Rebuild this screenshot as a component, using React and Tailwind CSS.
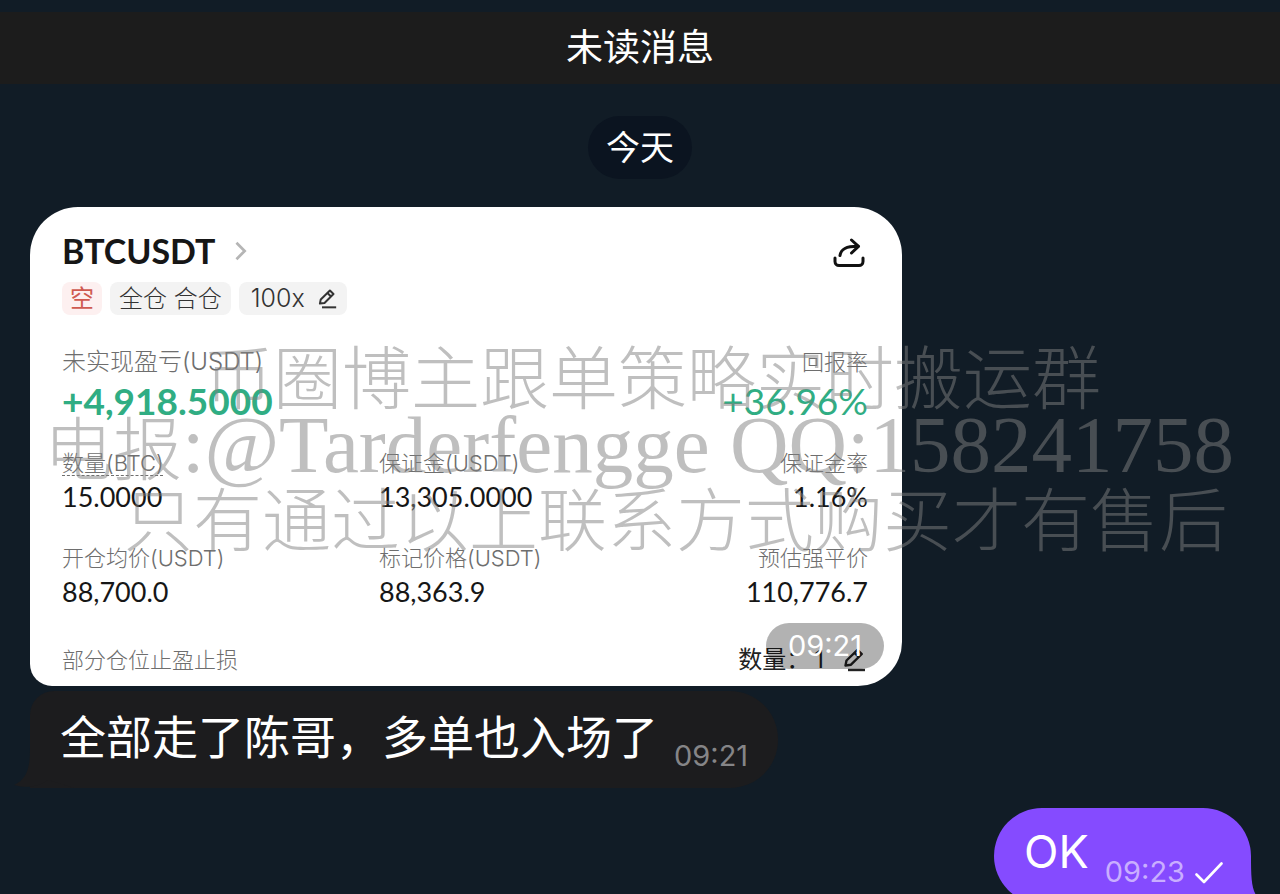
import React from 'react';

const stats = [
    { label: '数量(BTC)', value: '15.0000', dotted: true },
    { label: '保证金(USDT)', value: '13,305.0000' },
    { label: '保证金率', value: '1.16%' },
];

const prices = [
    { label: '开仓均价(USDT)', value: '88,700.0' },
    { label: '标记价格(USDT)', value: '88,363.9' },
    { label: '预估强平价', value: '110,776.7' },
];

const EditIcon = ({ className }) => (
    <svg viewBox="0 0 24 24" fill="none" stroke="currentColor" strokeWidth="2.4" strokeLinejoin="round" className={className}>
        <path d="M3.500 17.500 4.500 12.500 15.500 1.800 19.800 6 9 16.700Z" />
        <path d="M12.500 4.800 16.800 9" />
        <path d="M6 22h17" />
    </svg>
);

const ShareIcon = () => (
    <svg viewBox="0 0 32 30" fill="none" stroke="currentColor" strokeWidth="3" strokeLinecap="round" strokeLinejoin="round" className="h-[30px] w-8">
        <path d="M2 20v3.500a4 4 0 0 0 4 4h20a4 4 0 0 0 4-4V20" />
        <path d="M7 17.500C8 11 13 8.300 25 8.300" />
        <path d="M18.500 2 25.500 8.300 18.500 15" />
    </svg>
);

const StatRow = ({ items, className }) => (
    <dl className={`grid grid-cols-[317fr_245fr_244fr] ${className}`}>
        {items.map((item) => (
            <div key={item.label} className="whitespace-nowrap last:text-right">
                <dt className="text-[22px] leading-7 font-light text-[#6e6e6e]">
                    <span className={item.dotted ? 'underline decoration-dashed decoration-1 underline-offset-4' : ''}>{item.label}</span>
                </dt>
                <dd className="mt-1 font-['Lato',sans-serif] text-[27px] leading-8 text-[#161616]">{item.value}</dd>
            </div>
        ))}
    </dl>
);

const PositionCard = () => (
    <article className="relative w-full max-w-[872px] rounded-t-[48px] rounded-br-[44px] rounded-bl-[22px] bg-white pt-6 pr-[34px] pb-3 pl-8">
        <header className="flex h-10 items-center justify-between">
            <a href="#btcusdt" className="flex items-center gap-[18px] font-['Lato',sans-serif] text-[34px] leading-10 font-bold text-[#161616]">
                BTCUSDT
                <svg viewBox="0 0 14 22" fill="none" stroke="#b5b5b5" strokeWidth="3" className="h-5 w-3.5">
                    <path d="M2 2l9 9-9 9" />
                </svg>
            </a>
            <button type="button" aria-label="分享" className="mt-1 mr-[3px] text-[#111]">
                <ShareIcon />
            </button>
        </header>

        <div className="mt-[11px] flex gap-2 text-2xl leading-[33px] font-light text-[#333]">
            <span className="rounded-lg bg-[#fdf0f0] px-2 font-normal text-[#cf5a50]">空</span>
            <span className="rounded-lg bg-[#f3f3f3] px-[9px]">全仓 合仓</span>
            <button type="button" className="flex items-center gap-3 rounded-lg bg-[#f3f3f3] pr-2.5 pl-3">
                <span className="text-[25px]">100x</span>
                <EditIcon className="h-5 w-5" />
            </button>
        </div>

        <div className="mt-[33px] flex justify-between">
            <div>
                <p className="text-2xl leading-7 font-light text-[#6e6e6e]">未实现盈亏(USDT)</p>
                <p className="mt-[3px] font-['Lato',sans-serif] text-[37px] leading-11 font-bold text-[#30ad83]">+4,918.5000</p>
            </div>
            <div className="text-right">
                <p className="text-[22px] leading-7 font-light text-[#6e6e6e]">回报率</p>
                <p className="mt-[3px] font-['Lato',sans-serif] text-[37px] leading-11 text-[#30ad83]">+36.96%</p>
            </div>
        </div>

        <StatRow items={stats} className="mt-[26px]" />
        <StatRow items={prices} className="mt-[31px]" />

        <footer className="mt-[38px] flex items-center justify-between leading-7">
            <p className="text-[22px] font-light text-[#6e6e6e]">部分仓位止盈止损</p>
            <button type="button" className="flex items-center text-2xl leading-7 text-[#222]">
                <span>数量：</span>
                <span className="mr-[18px] ml-1">1</span>
                <EditIcon className="mr-0.5 h-6 w-6" />
            </button>
        </footer>

        <time className="absolute right-[18px] bottom-[17px] rounded-full bg-black/30 px-[22px] text-[29px] leading-[46px] text-white">09:21</time>
    </article>
);

const Watermark = () => (
    <div className="pointer-events-none absolute inset-x-0 top-[339px] font-['Noto_Sans_CJK_SC',sans-serif] text-[69px] leading-[71px] font-light whitespace-nowrap text-[#808080]/50">
        <p className="pl-51">币圈博主跟单策略实时搬运群</p>
        <p className="flex pl-11">
            电报
            <span className="font-['Liberation_Serif',serif] text-[81px] font-normal">:@Tarderfengge QQ:158241758</span>
        </p>
        <p className="pl-31">只有通过以上联系方式购买才有售后</p>
    </div>
);

const App = () => {
    return (
        <main className="relative flex h-screen flex-col overflow-hidden bg-[#111c26] pt-3 font-['Inter','Noto_Sans_CJK_SC',sans-serif] text-white">
            <h1 className="shrink-0 bg-[#1c1c1c] text-center text-[37px] leading-[72px]">未读消息</h1>

            <p className="mt-8 shrink-0 self-center rounded-full bg-[#0b1420] px-[18px] text-[34px] leading-[63px]">今天</p>

            <section className="mt-7 flex flex-col items-start pr-[29px] pl-[30px]">
                <PositionCard />

                <div className="relative mt-[5px] flex items-end rounded-t-[40px] rounded-r-[48px] rounded-tl-[24px] bg-[#1c1c1e] px-[30px]">
                    <svg viewBox="0 0 60 40" fill="#1c1c1e" className="absolute bottom-0 -left-4 h-10 w-15">
                        <path d="M16 0C16 20 13 31 0 37c14 4 26 1 34-5l26 8V0Z" />
                    </svg>
                    <p className="relative pb-1 text-[46px] leading-[93px]">全部走了陈哥，多单也入场了</p>
                    <time className="ml-4 pb-3 text-[29px] leading-10 text-[#858587]">09:21</time>
                </div>

                <div className="relative mt-5 flex items-end self-end rounded-full bg-[#854bff] pr-7 pl-[30px]">
                    <svg viewBox="0 0 60 48" fill="#854bff" className="absolute -right-4 bottom-0 h-12 w-15">
                        <path d="M44 0C44 30 45 42 60 47c-14 4-26 1-34-5L0 48V0Z" />
                    </svg>
                    <p className="relative pb-2 text-[45px] leading-[88px]">OK</p>
                    <time className="relative ml-4 pb-3 text-[29px] leading-10 text-[#c9aeff]">09:23</time>
                    <svg viewBox="0 0 28 22" fill="none" stroke="#fff" strokeWidth="2.6" strokeLinecap="round" strokeLinejoin="round" className="relative mb-5 ml-2.5 h-[22px] w-7">
                        <path d="M1.500 12.500 9 20 26.500 1.500" />
                    </svg>
                </div>
            </section>

            <Watermark />
        </main>
    );
};

export default App;
